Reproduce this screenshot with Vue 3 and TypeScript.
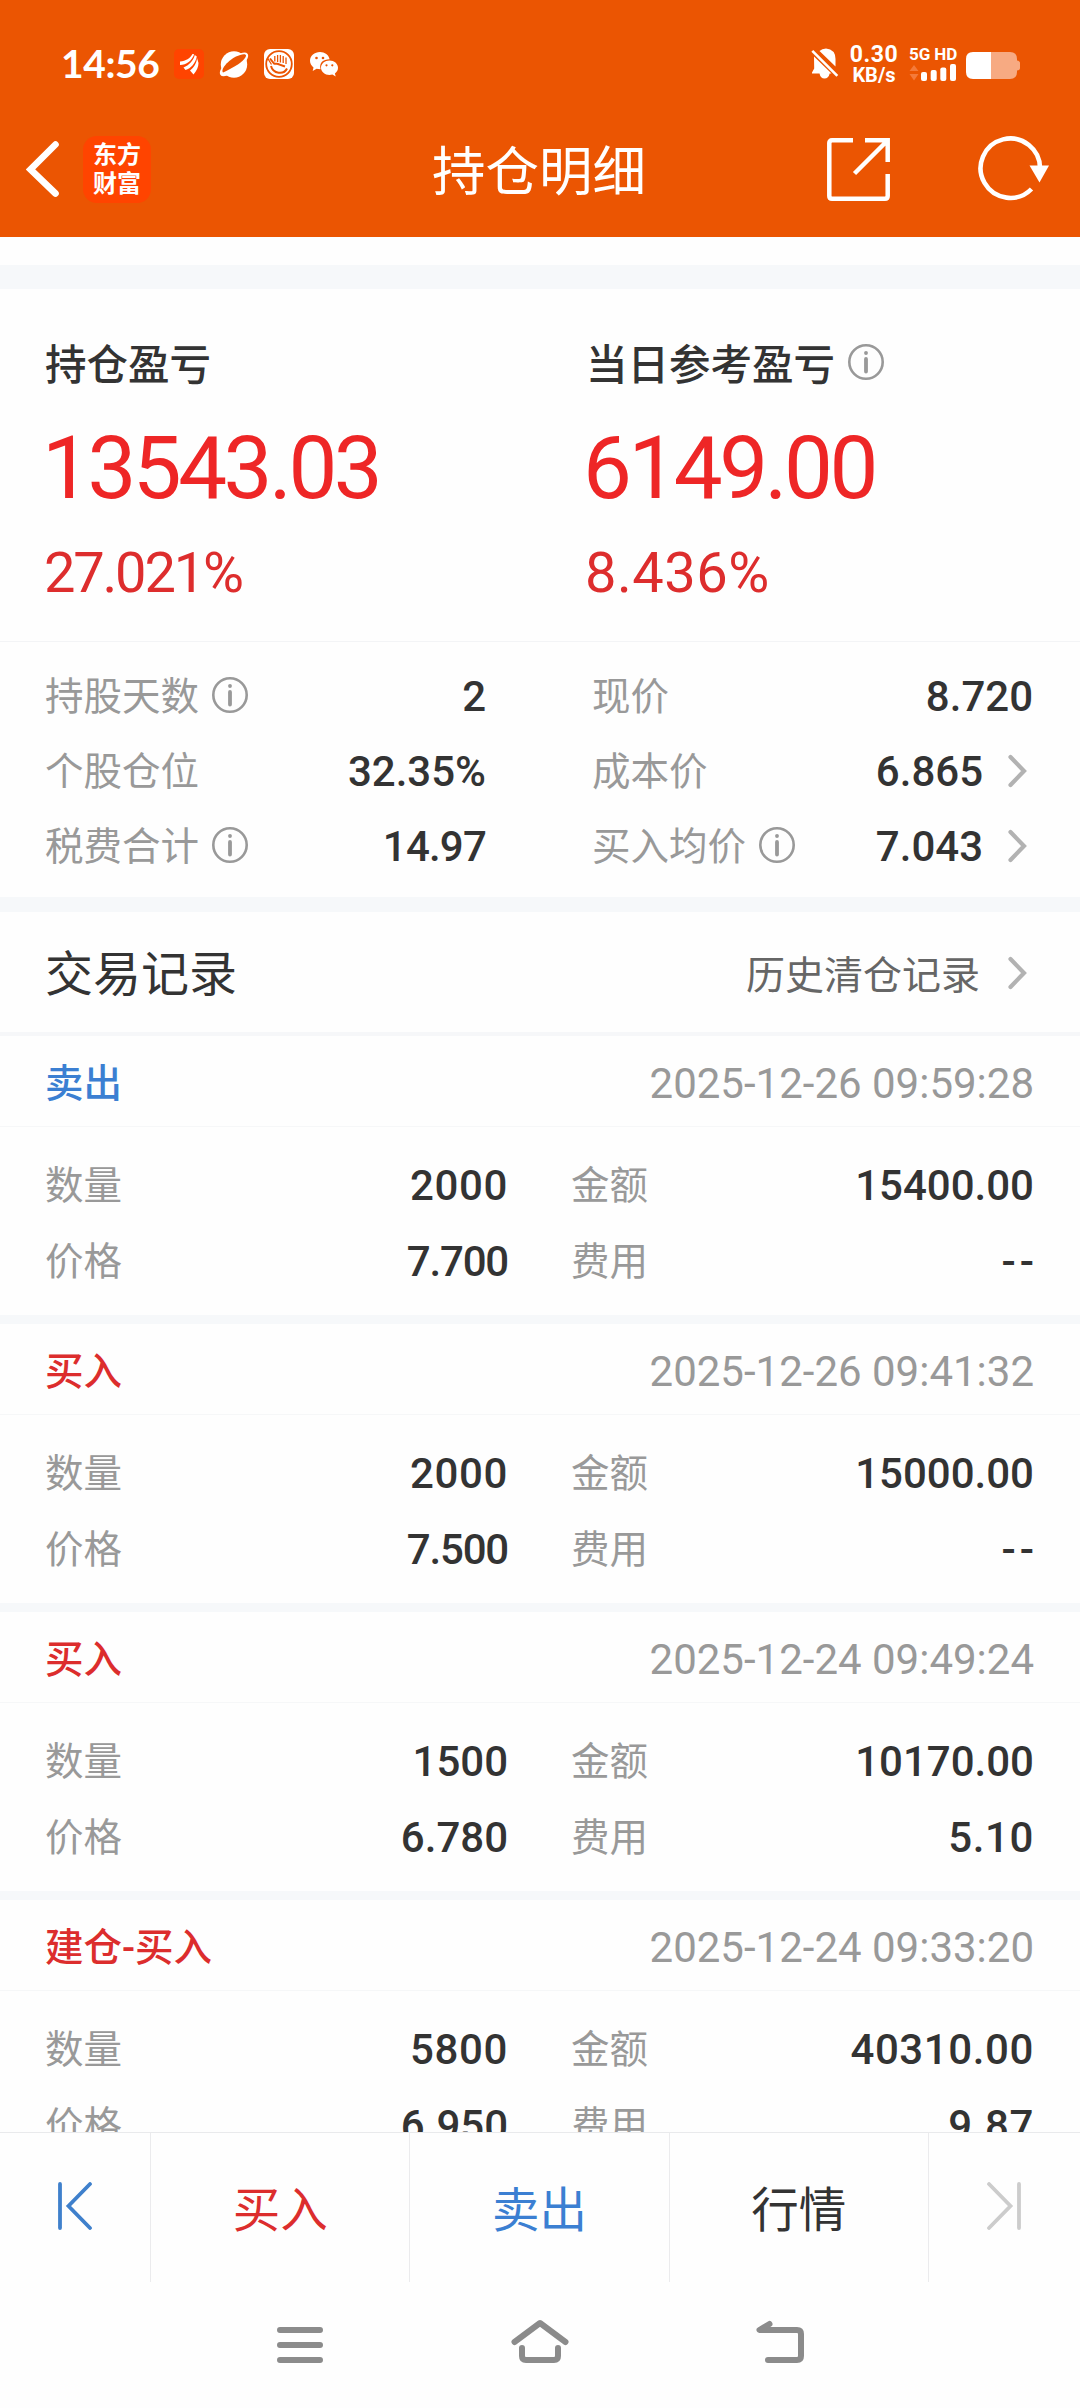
<script setup lang="ts">
interface Stat {
  label: string
  value: string
  info?: boolean
  link?: boolean
}
interface TradeRecord {
  side: string
  kind: 'buy' | 'sell'
  time: string
  quantity: string
  amount: string
  price: string
  fee: string
}

const leftStats: Stat[] = [
  { label: '持股天数', value: '2', info: true },
  { label: '个股仓位', value: '32.35%' },
  { label: '税费合计', value: '14.97', info: true },
]
const rightStats: Stat[] = [
  { label: '现价', value: '8.720' },
  { label: '成本价', value: '6.865', link: true },
  { label: '买入均价', value: '7.043', info: true, link: true },
]
const records: TradeRecord[] = [
  { side: '卖出', kind: 'sell', time: '2025-12-26 09:59:28', quantity: '2000', amount: '15400.00', price: '7.700', fee: '--' },
  { side: '买入', kind: 'buy', time: '2025-12-26 09:41:32', quantity: '2000', amount: '15000.00', price: '7.500', fee: '--' },
  { side: '买入', kind: 'buy', time: '2025-12-24 09:49:24', quantity: '1500', amount: '10170.00', price: '6.780', fee: '5.10' },
  { side: '建仓-买入', kind: 'buy', time: '2025-12-24 09:33:20', quantity: '5800', amount: '40310.00', price: '6.950', fee: '9.87' },
]

function fit(value: string): string {
  if (value === '--') return 'dashes'
  if (value.startsWith('7.')) return 'tighter'
  if (value.length === 5 || value.startsWith('1')) return 'tight'
  return ''
}
</script>

<template>
  <div class="screen">
    <header class="top">
      <div class="status">
        <span class="clock">14:56</span>
        <svg class="s-app" width="30" height="30" viewBox="0 0 30 30">
          <rect width="30" height="30" rx="5" fill="#ff4400" />
          <path d="M6 12.500C12 12 16 9.500 18.500 5L20.200 5.200C18 11.500 12.500 16 6 16Z" fill="#fff" />
          <path d="M9.500 18.500C15 16.500 19.500 11.500 20.800 6L22.800 7.500C21.500 14 17 19.500 11.500 21Z" fill="#fff" />
          <path d="M16 21.500C20 18.500 22.700 14 23 9L24.500 14C24.500 18 22.500 22 19.500 25.500Z" fill="#fff" />
        </svg>
        <svg class="s-planet" width="30" height="30" viewBox="0 0 30 30">
          <circle cx="15" cy="15.500" r="13.200" fill="#fff" />
          <ellipse cx="15" cy="15.300" rx="17.200" ry="6.600" transform="rotate(-38 15 15.300)" fill="#fff" />
          <path d="M4 23.500C1 20 10 11 17 7.500C22 5 27.500 4 27 7C26 11 18 16.500 11 20Q6 22.500 4 23.500Z" fill="#eb5502" />
        </svg>
        <svg class="s-hand" width="30" height="30" viewBox="0 0 30 30">
          <rect width="30" height="30" rx="6" fill="#fff" />
          <circle cx="15" cy="15" r="12.800" fill="none" stroke="#eb5502" stroke-width="1.800" />
          <path d="M3.500 9L7.500 15.500M10.800 7V12.500M13.600 6V13M16.400 6V13.500M19.200 7V14M22 8.500V15" fill="none" stroke="#eb5502" stroke-width="1.300" />
          <path d="M6 9.500L10 14.500C12 15.500 13.500 14 15 15.500L21 17.500M7 17C9 25 20 26 23 19.500" fill="none" stroke="#eb5502" stroke-width="2" />
        </svg>
        <svg class="s-wechat" width="28" height="25" viewBox="0 0 28 25">
          <path d="M10 0C4.500 0 0 3.900 0 8.800c0 2.700 1.400 5 3.500 6.600L2.700 19l3.900-2.200c1.100.3 2.300.5 3.600.5L10.500 17C9 11 13 7.300 19.600 7.300C18.800 3 14.800 0 10 0Z" fill="#fff" />
          <path d="M19.500 8.500c-4.700 0-8.500 3.200-8.500 7.200s3.800 7.200 8.500 7.200c1 0 2-.2 2.900-.4l3.300 1.900-.8-3c1.900-1.400 3.100-3.400 3.100-5.700 0-4-3.800-7.200-8.500-7.200Z" fill="#fff" />
          <g fill="#eb5502">
            <circle cx="6.500" cy="6" r="1.300" /><circle cx="13" cy="6" r="1.300" />
            <circle cx="16.500" cy="13.300" r="1.100" /><circle cx="22.300" cy="13.300" r="1.100" />
          </g>
        </svg>
        <span class="grow"></span>
        <svg class="s-bell" width="28" height="31" viewBox="0 0 28 31">
          <path d="M3 8.500L3.200 20.500 1 24.500V25.500H8.500Q9.500 30.500 13.500 30.500T18.700 25.500H20.500ZM8.500 3Q11 .5 15 .5Q24.500 1.500 24.500 11V18.500Z" fill="#fff" />
          <path d="M1.300 2.800L26.300 27.800" stroke="#fff" stroke-width="2.600" />
        </svg>
        <div class="speed"><span class="rate">0.30</span><span class="unit">KB/s</span></div>
        <div class="signal">
          <span class="net">5G HD</span>
          <svg width="48" height="17" viewBox="0 0 48 17">
            <path d="M5 1L9.500 7H.500ZM5 16.500L9.500 10H.500Z" fill="#f47a3a" />
            <g fill="#fff">
              <rect x="12" y="8" width="6" height="9" rx="2" /><rect x="21.700" y="6" width="6" height="11" rx="2" />
              <rect x="31.300" y="3.500" width="6" height="13.500" rx="2" /><rect x="41" y="0" width="6" height="17" rx="2" />
            </g>
          </svg>
        </div>
        <svg class="s-battery" width="54" height="27" viewBox="0 0 54 27">
          <path d="M25 0H44Q51 0 51 7V8.500Q54 9 54 11V16Q54 18 51 18.500V20Q51 27 44 27H25Z" fill="#f7aa82" />
          <path d="M25 0H7Q0 0 0 7V20Q0 27 7 27H25Z" fill="#fff" />
        </svg>
      </div>
      <nav class="titlebar">
        <svg class="back" width="34" height="58" viewBox="0 0 34 58">
          <path d="M29.500 4.500L4.500 29.500L29.500 53.500" fill="none" stroke="#fff" stroke-width="6.600" stroke-linecap="round" />
        </svg>
        <div class="logo"><span>东方</span><span>财富</span></div>
        <h1>持仓明细</h1>
        <svg class="share" width="64" height="64" viewBox="0 0 64 64">
          <path d="M26 2.300H5Q2.300 2.300 2.300 5V58Q2.300 60.700 5 60.700H58Q60.700 60.700 60.700 58V36M38 2.300H60.700V24M60 3L27.500 35.500" fill="none" stroke="#fff" stroke-width="4.500" />
        </svg>
        <svg class="refresh" width="72" height="66" viewBox="0 0 72 66">
          <path d="M62 33A29.700 29.700 0 1 0 53.500 53" fill="none" stroke="#fff" stroke-width="4.600" />
          <path d="M51.500 29.500H71L61.500 46.500Z" fill="#fff" />
        </svg>
      </nav>
    </header>
    <div class="strip"></div>

    <section class="summary">
      <div class="col">
        <div class="label">持仓盈亏</div>
        <div class="big">13543.03</div>
        <div class="pct a">27.021%</div>
      </div>
      <div class="col">
        <div class="label">
          当日参考盈亏
          <svg class="info" width="36" height="36" viewBox="0 0 36 36"><circle cx="18" cy="18" r="16.700" /><path d="M18 15V27.500M18 8.800V9" /></svg>
        </div>
        <div class="big">6149.00</div>
        <div class="pct b">8.436%</div>
      </div>
    </section>

    <section class="stats">
      <div class="list left">
        <div v-for="s in leftStats" :key="s.label" class="stat">
          <span class="name">{{ s.label }}</span>
          <svg v-if="s.info" class="info" width="36" height="36" viewBox="0 0 36 36"><circle cx="18" cy="18" r="16.700" /><path d="M18 15V27.500M18 8.800V9" /></svg>
          <span class="num" :class="fit(s.value)">{{ s.value }}</span>
        </div>
      </div>
      <div class="list right">
        <div v-for="s in rightStats" :key="s.label" class="stat">
          <span class="name">{{ s.label }}</span>
          <svg v-if="s.info" class="info" width="36" height="36" viewBox="0 0 36 36"><circle cx="18" cy="18" r="16.700" /><path d="M18 15V27.500M18 8.800V9" /></svg>
          <span class="num">{{ s.value }}</span>
          <svg v-if="s.link" class="chev" width="20" height="34" viewBox="0 0 20 34"><path d="M3.500 3L17 17L3.500 31" /></svg>
        </div>
      </div>
    </section>

    <section class="history">
      <h2>交易记录</h2>
      <span class="more">历史清仓记录</span>
      <svg class="chev" width="20" height="34" viewBox="0 0 20 34"><path d="M3.500 3L17 17L3.500 31" /></svg>
    </section>

    <main class="records">
      <article v-for="r in records" :key="r.time" class="record">
        <div class="head">
          <span class="side" :class="r.kind">{{ r.side }}</span>
          <time>{{ r.time }}</time>
        </div>
        <div class="body">
          <div class="pair"><span class="name">数量</span><span class="num" :class="fit(r.quantity)">{{ r.quantity }}</span></div>
          <div class="pair"><span class="name">金额</span><span class="num" :class="fit(r.amount)">{{ r.amount }}</span></div>
          <div class="pair"><span class="name">价格</span><span class="num" :class="fit(r.price)">{{ r.price }}</span></div>
          <div class="pair"><span class="name">费用</span><span class="num" :class="fit(r.fee)">{{ r.fee }}</span></div>
        </div>
      </article>
    </main>

    <footer class="actions">
      <div class="cell edge">
        <svg width="36" height="48" viewBox="0 0 36 48"><path d="M3 2V46M33 2L11.500 24L33 46" fill="none" stroke="#3f80cc" stroke-width="3.800" stroke-linecap="round" /></svg>
      </div>
      <div class="cell buy">买入</div>
      <div class="cell sell">卖出</div>
      <div class="cell">行情</div>
      <div class="cell edge last">
        <svg width="36" height="48" viewBox="0 0 36 48"><path d="M33 2V46M3 2L24.500 24L3 46" fill="none" stroke="#cccccc" stroke-width="3.800" stroke-linecap="round" /></svg>
      </div>
    </footer>

    <div class="sysnav">
      <svg class="n-menu" width="46" height="48" viewBox="0 0 46 48"><path d="M3 15H43M3 30H43M3 45H43" /></svg>
      <svg class="n-home" width="60" height="48" viewBox="0 0 60 48"><path d="M4.500 27L30 8L55.500 27M12 33V41Q12 45 16 45H44Q48 45 48 41V33" /></svg>
      <svg class="n-back" width="50" height="48" viewBox="0 0 50 48"><path d="M13.500 9L3.500 15H41Q45 15 45 19V41Q45 45 41 45H12" /></svg>
    </div>
  </div>
</template>

<style>
body {
  margin: 0;
  background: #fefefe;
}
</style>

<style scoped>
.screen {
  width: 1080px;
  height: 2408px;
  display: flex;
  flex-direction: column;
  overflow: hidden;
  background: #fefefe;
  color: #333;
  font-family: Roboto, 'Noto Sans CJK SC', sans-serif;
}
svg {
  display: block;
  flex: none;
}
.top {
  height: 237px;
  flex: none;
  background: #eb5502;
  color: #fff;
}
.status {
  height: 100px;
  display: flex;
  align-items: flex-start;
  padding: 0 60px 0 61px;
}
.clock {
  width: 113px;
  margin-top: 43px;
  font: 700 39px/40px Lato, sans-serif;
  letter-spacing: -0.4px;
}
.s-app { margin-top: 49px; }
.s-planet { margin: 49px 0 0 15px; overflow: visible; }
.s-hand { margin: 49px 0 0 15px; }
.s-wechat { margin: 52px 0 0 16px; }
.grow { flex: 1; }
.s-bell { margin-top: 48px; }
.speed {
  width: 48px;
  margin: 44px 0 0 11px;
  display: flex;
  flex-direction: column;
  align-items: center;
  font-weight: 700;
  white-space: nowrap;
}
.rate { font-size: 23px; line-height: 22px; letter-spacing: 0.6px; }
.unit { font-size: 20px; line-height: 18px; }
.signal {
  width: 48px;
  margin: 45px 9px 0 11px;
  display: flex;
  flex-direction: column;
}
.net { font-size: 17px; line-height: 18px; font-weight: 700; white-space: nowrap; letter-spacing: -0.1px; }
.signal svg { margin-top: 1px; }
.s-battery { margin-top: 52px; }
.titlebar {
  height: 137px;
  display: flex;
  align-items: flex-start;
}
.back { margin: 40px 0 0 26px; }
.logo {
  width: 68px;
  height: 67px;
  margin: 36px 0 0 23px;
  border-radius: 14px;
  background: #ff4400;
  display: flex;
  flex-direction: column;
  align-items: center;
  justify-content: center;
  font-size: 24px;
  line-height: 29px;
  font-weight: 700;
}
h1 {
  width: 240px;
  margin: 38px 0 0 268px;
  text-align: center;
  font-size: 53.500px;
  line-height: 70px;
  font-weight: 400;
}
.share { margin: 38px 0 0 168px; }
.refresh { margin: 36px 0 0 87px; }
.strip {
  height: 24px;
  flex: none;
  margin-top: 28px;
  background: #f6f8fa;
}
.summary {
  height: 353px;
  flex: none;
  display: flex;
  padding-left: 45px;
  border-bottom: 1px solid #f3f4f6;
  box-sizing: border-box;
  white-space: nowrap;
}
.col { width: 541px; }
.col + .col { width: 493px; }
.label {
  height: 60px;
  margin-top: 47px;
  display: flex;
  align-items: center;
  font-size: 41.500px;
  line-height: 60px;
  font-weight: 500;
}
.label .info { margin-left: 13px; position: relative; top: -4px; }
.big {
  height: 90px;
  margin: 27px 0 0 -3px;
  font-size: 87px;
  line-height: 90px;
  color: #ee2626;
  letter-spacing: -3.500px;
}
.pct {
  height: 60px;
  margin-top: 30px;
  margin-left: -1px;
  font-size: 56px;
  line-height: 60px;
  color: #dd2d2d;
}
.pct.a { letter-spacing: -2.200px; }
.pct.b { letter-spacing: 0.500px; }
.info { fill: none; stroke: #999; stroke-width: 2.600; stroke-linecap: round; }
.info path { stroke-width: 3.800; }
.stats {
  height: 255px;
  flex: none;
  display: flex;
  justify-content: space-between;
  box-sizing: border-box;
  padding: 17px 47px 0 45px;
}
.left { width: 441px; }
.right { width: 441px; }
.stat {
  height: 75px;
  display: flex;
  align-items: center;
}
.name {
  font-size: 38.500px;
  line-height: 60px;
  color: #999;
  white-space: nowrap;
}
.stat .info { margin: -4px 0 0 13px; }
.num {
  margin-left: auto;
  font-size: 42px;
  line-height: 60px;
  font-weight: 500;
  color: #333;
}
.chev { fill: none; stroke: #b2b2b2; stroke-width: 4.200; stroke-linecap: round; margin: -2px 6px 0 24px; }
.history {
  height: 139px;
  flex: none;
  display: flex;
  align-items: center;
  box-sizing: border-box;
  padding: 5px 47px 0 45px;
  border-top: 15px solid #f6f8fa;
  border-bottom: 4px solid #f6f7f9;
}
.history h2 { margin: 0; font-size: 48px; line-height: 60px; font-weight: 400; }
.more { margin-left: auto; font-size: 39px; line-height: 60px; color: #666; padding-top: 2px; }
.history .chev { margin: -4px 6px 0 27px; }
.records {
  height: 1096px;
  flex: none;
  overflow: hidden;
}
.record {
  height: 288px;
  box-sizing: border-box;
  border-bottom: 9px solid #f6f8fa;
}
.head {
  height: 91px;
  display: flex;
  align-items: center;
  justify-content: space-between;
  box-sizing: border-box;
  padding: 5px 46px 0 45px;
  border-bottom: 1px solid #f6f7f8;
}
.side { font-size: 38.500px; line-height: 60px; font-weight: 500; }
.buy { color: #dc2d2d; }
.sell { color: #3b7fd2; }
.head time { font-size: 42px; line-height: 60px; color: #999; }
.body {
  display: grid;
  grid-template-columns: 463px 463px;
  justify-content: space-between;
  padding: 21px 46px 0 45px;
}
.pair { height: 76px; display: flex; align-items: center; }
.body .num { letter-spacing: 0.6px; }
.body .num.tight { letter-spacing: 0; }
.body .num.tighter { letter-spacing: -1.200px; }
.body .num.dashes { letter-spacing: 4px; margin-right: -4px; }
.stat .num.tight { letter-spacing: -0.800px; }
.actions {
  height: 150px;
  flex: none;
  display: flex;
  box-sizing: border-box;
  border-top: 1px solid #e9eaec;
}
.cell {
  flex: 1;
  display: flex;
  align-items: center;
  justify-content: center;
  box-sizing: border-box;
  padding-bottom: 3px;
  border-right: 1px solid #ebebed;
  font-size: 47.500px;
}
.cell.edge { flex: none; width: 151px; }
.cell.last { border-right: 0; }
.sysnav {
  flex: 1;
  display: flex;
  padding: 33px 0 0 277px;
}
.sysnav svg { stroke: #8b8b8b; stroke-width: 6; stroke-linecap: round; stroke-linejoin: round; fill: none; }
.n-home { margin-left: 187px; }
.n-back { margin-left: 186px; }
</style>
